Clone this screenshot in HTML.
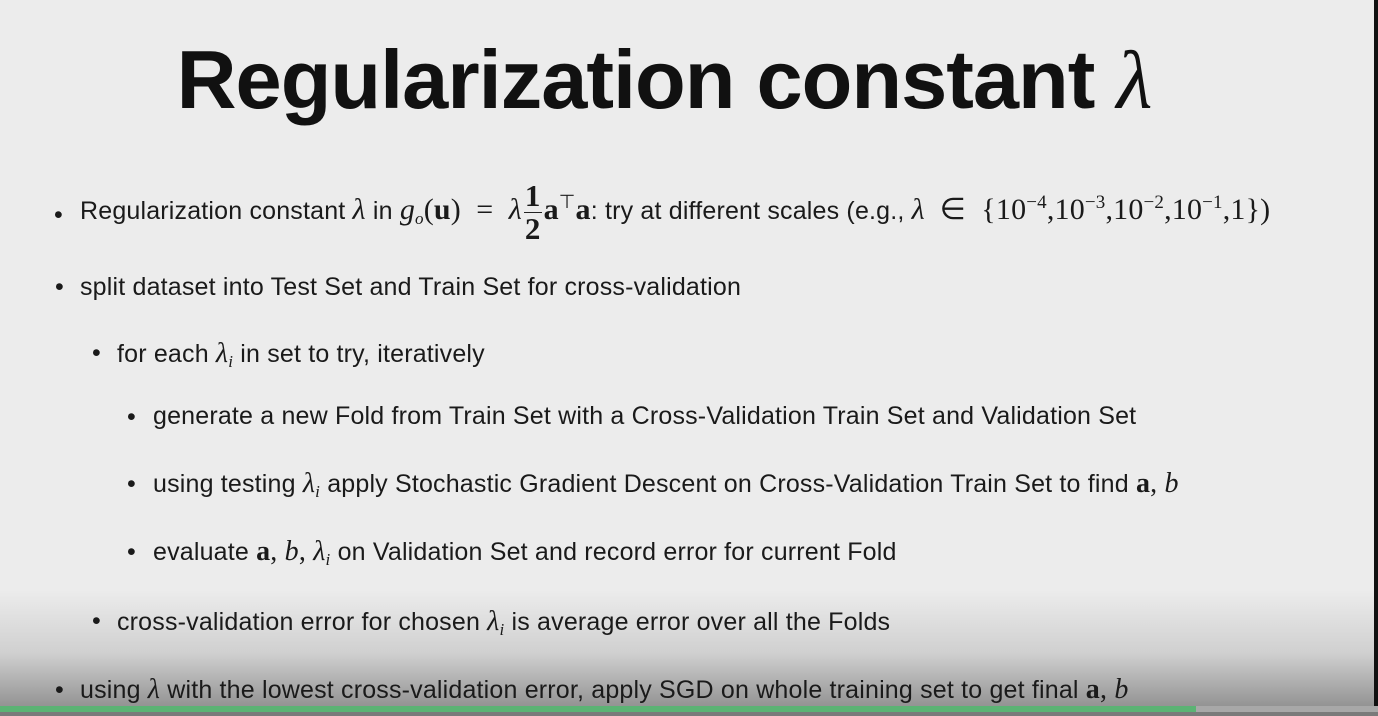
<!DOCTYPE html>
<html><head><style>
body{margin:0;width:1378px;height:716px;overflow:hidden;background:#ececec;position:relative;font-family:"Liberation Sans",Arial,sans-serif;color:#1a1a1a}
.t{position:absolute;left:0;width:1328px;text-align:center;top:32px;font-size:83px;font-weight:bold;letter-spacing:-1px;color:#111}
.l{position:absolute;font-size:25px;white-space:nowrap;line-height:1;letter-spacing:0.18px}
.m{font-family:"Liberation Serif",serif;font-style:italic;font-size:28px}
.mb{font-family:"Liberation Serif",serif;font-weight:bold;font-size:28px}
.mr{font-family:"Liberation Serif",serif;font-size:28px}
.big .m,.big .mb,.big .mr{font-size:30px}
sub{font-size:17px;vertical-align:-5px}
sup{font-size:19px;vertical-align:11px}
.frac{display:inline-block;vertical-align:middle;text-align:center;font-family:"Liberation Serif",serif;font-weight:bold;font-size:31px;line-height:32px;margin:0 2px}
.frac span{display:block}
.frac .n{border-bottom:1.5px solid #222;padding:0 1px}
.grad{position:absolute;left:0;top:590px;width:1378px;height:126px;background:linear-gradient(#ececec00,#d0d0d0 50%,#888)}
</style></head><body>
<div class="t">Regularization constant <span style="font-family:'Liberation Serif',serif;font-style:italic;font-weight:normal">λ</span></div>

<div class="l" style="left:54px;top:203px">•</div>
<div class="l big" style="left:80px;top:180px">Regularization constant <span class="m">λ</span> in <span class="m">g<sub>o</sub></span><span class="mr">(</span><span class="mb">u</span><span class="mr">) &nbsp;=&nbsp; </span><span class="m">λ</span><span class="frac"><span class="n">1</span><span>2</span></span><span class="mb">a</span><sup>⊤</sup><span class="mb">a</span>: try at different scales (e.g., <span class="m">λ</span> <span class="mr">&nbsp;∈&nbsp; {10<sup>−4</sup>,10<sup>−3</sup>,10<sup>−2</sup>,10<sup>−1</sup>,1})</span></div>

<div class="l" style="left:55px;top:275px">•</div>
<div class="l" style="left:80px;top:275px">split dataset into Test Set and Train Set for cross-validation</div>

<div class="l" style="left:92px;top:341px">•</div>
<div class="l" style="left:117px;top:340px">for each <span class="m">λ<sub>i</sub></span> in set to try, iteratively</div>

<div class="l" style="left:127px;top:405px">•</div>
<div class="l" style="left:153px;top:404px">generate a new Fold from Train Set with a Cross-Validation Train Set and Validation Set</div>

<div class="l" style="left:127px;top:472px">•</div>
<div class="l" style="left:153px;top:470px">using testing <span class="m">λ<sub>i</sub></span> apply Stochastic Gradient Descent on Cross-Validation Train Set to find <span class="mb">a</span><span class="mr">, </span><span class="m">b</span></div>

<div class="l" style="left:127px;top:540px">•</div>
<div class="l" style="left:153px;top:538px">evaluate <span class="mb">a</span><span class="mr">, </span><span class="m">b</span><span class="mr">, </span><span class="m">λ<sub>i</sub></span> on Validation Set and record error for current Fold</div>

<div class="grad"></div>

<div class="l" style="left:92px;top:609px">•</div>
<div class="l" style="left:117px;top:608px">cross-validation error for chosen <span class="m">λ<sub>i</sub></span> is average error over all the Folds</div>

<div class="l" style="left:55px;top:678px">•</div>
<div class="l" style="left:80px;top:676px">using <span class="m">λ</span> with the lowest cross-validation error, apply SGD on whole training set to get final <span class="mb">a</span><span class="mr">, </span><span class="m">b</span></div>

<div style="position:absolute;left:0;top:706px;width:1378px;height:6px;background:#a8a8a8"></div>
<div style="position:absolute;left:0;top:706px;width:1196px;height:6px;background:#5bb374"></div>
<div style="position:absolute;left:0;top:712px;width:1378px;height:4px;background:#7a7a7a"></div>
<div style="position:absolute;left:1374px;top:0;width:4px;height:706px;background:#111"></div>
</body></html>
